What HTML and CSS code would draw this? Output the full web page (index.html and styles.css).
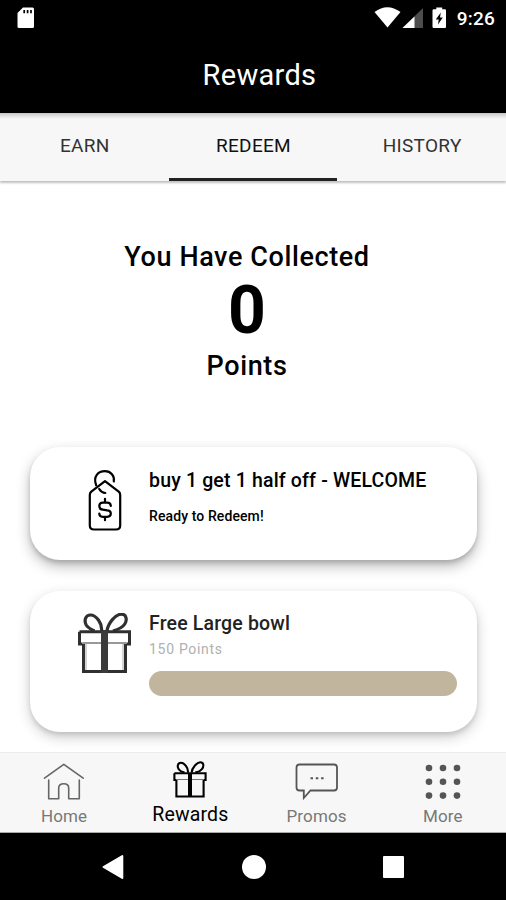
FILE: index.html
```html
<!DOCTYPE html>
<html lang="en">
<head>
    <meta charset="UTF-8">
    <meta name="viewport" content="width=device-width, initial-scale=1.0">
    <title>Rewards</title>
    <link rel="stylesheet" href="styles.css">
</head>
<body>
    <div class="app">
        <!-- Status bar -->
        <div class="status-bar">
            <svg class="sd-icon" width="18" height="22" viewBox="0 0 18 22">
                <path d="M6 0.5H15.5Q17 0.5 17 2V19.5Q17 21 15.5 21H2Q0.5 21 0.5 19.5V6Z" fill="#fff"/>
                <path d="M7.2 3V6.3M10.6 3V6.3M14 3V6.3" stroke="#000" stroke-width="1.7"/>
            </svg>
            <div class="status-right">
                <svg class="wifi" width="27" height="22" viewBox="0 0 27 22">
                    <path d="M0.5 5Q13.3 -4.5 26.5 5L13.5 20.5Z" fill="#fff"/>
                </svg>
                <svg class="signal" width="22" height="21" viewBox="0 0 22 21">
                    <path d="M21 0V20H0.5Z" fill="#4d4d4d"/>
                    <path d="M12.5 8.5V20H0.5Z" fill="#fff"/>
                </svg>
                <svg class="battery" width="15" height="22" viewBox="0 0 15 22">
                    <path d="M4.3 0.5H10.2V2.2H13Q14 2.2 14 3.5V19.7Q14 21 13 21H1.8Q0.5 21 0.5 19.7V3.5Q0.5 2.2 1.8 2.2H4.3Z" fill="#fff"/>
                    <path d="M8.8 5.5L3.8 12.6H6.7L6 17.5L10.8 10.5H8Z" fill="#000"/>
                </svg>
                <span class="clock">9:26</span>
            </div>
        </div>

        <div class="header"><h1>Rewards</h1></div>

        <div class="tabs">
            <div class="tab"><span>EARN</span></div>
            <div class="tab active"><span>REDEEM</span></div>
            <div class="tab"><span>HISTORY</span></div>
        </div>

        <div class="content">
            <div class="points">
                <div class="points-title">You Have Collected</div>
                <div class="points-value">0</div>
                <div class="points-label">Points</div>
            </div>

            <div class="card card-offer">
                <div class="card-icon">
                    <svg width="34" height="63" viewBox="0 0 34 63" fill="none" stroke="#000" stroke-width="2.2" stroke-linecap="round" stroke-linejoin="round">
                        <path d="M8.2 16.3C4.8 7.5 10.2 2.2 17 2.2C22.8 2.2 26.8 6.8 25.8 12.5"/>
                        <path d="M11.2 20Q13.5 23.8 17.3 24"/>
                        <path d="M17 12.2L30.7 22.7Q32.2 24 32.2 26V56.5Q32.2 60.5 28 60.5H6Q1.8 60.5 1.8 56.5V26Q1.8 24 3.3 22.7Z"/>
                        <path d="M22.8 36.8Q22.5 33.7 19.3 33.7H14.8Q11.3 33.7 11.3 37.1Q11.3 40.5 14.8 40.7L19.2 41.3Q22.8 41.5 22.8 44.6Q22.8 47.8 19.2 47.8H14.8Q11.3 47.8 11.3 44.5M17 29.8V33.7M17 47.8V51.2"/>
                    </svg>
                </div>
                <div class="card-body">
                    <div class="card-title">buy 1 get 1 half off - WELCOME</div>
                    <div class="card-ready">Ready to Redeem!</div>
                </div>
            </div>

            <div class="card card-gift">
                <div class="card-icon">
                    <svg width="54" height="62" viewBox="0 0 54 62" fill="none" stroke="#303030">
                        <path d="M5.5 31V58.5H47.5V31" stroke-width="3"/>
                        <path d="M1.5 18.8H51.5V31H48.5M4.5 31H1.5V18.8" stroke-width="3"/>
                        <path d="M4.5 30H48.5" stroke-width="1.4" stroke="#777"/>
                        <path d="M8 31V57M45 31V57" stroke-width="1" stroke="#aaa"/>
                        <path d="M26.5 17V60" stroke-width="7" stroke="#3b3b3b"/>
                        <path d="M23.5 18C24.5 10 18 2 12.5 2C6.8 2 6.2 8.2 8.2 12Q10 15 16.5 18M29 18C30 10 37.5 1.2 43.5 1.2C49 1.2 49 7.5 46.8 11Q44.2 15.2 35 18" stroke-width="3.2"/>
                    </svg>
                </div>
                <div class="card-body">
                    <div class="card-title gift-title">Free Large bowl</div>
                    <div class="card-points">150 Points</div>
                    <div class="progress"></div>
                </div>
            </div>
        </div>

        <!-- Bottom tab bar -->
        <div class="tab-bar">
            <div class="nav-item">
                <svg width="42" height="38" viewBox="0 0 42 38" fill="none" stroke="#666" stroke-width="1.6" stroke-linejoin="round" stroke-linecap="round">
                    <path d="M1.5 15.2L20.8 1.3L40.2 15.2"/>
                    <path d="M5.7 17V35.7H15.7V25Q15.7 20.7 20.8 20.7Q25.7 20.7 25.7 25V35.7H36.3V17"/>
                </svg>
                <span>Home</span>
            </div>
            <div class="nav-item rewards">
                <svg width="34" height="38" viewBox="0 0 34 38" fill="none" stroke="#000" stroke-width="2.1">
                    <path d="M3.4 19V35.5H30.6V19"/>
                    <path d="M1.4 12.2H32.6V19H30.6M3.4 19H1.4V12.2"/>
                    <path d="M3 18.5H31" stroke-width="0.9" stroke="#666"/>
                    <path d="M17 12V35.5" stroke-width="4"/>
                    <path d="M15 11.6C15.5 6.8 11.3 1.8 8 1.8C4.2 1.8 4.2 6 5.7 8.2Q7.3 10.7 11.5 11.6M18.6 11.6C19 6.5 24.2 1.2 27.3 1.2C31 1.2 31 5.5 29 8Q27.2 10.6 22.2 11.6"/>
                </svg>
                <span>Rewards</span>
            </div>
            <div class="nav-item">
                <svg width="44" height="38" viewBox="0 0 44 38" fill="none" stroke="#555" stroke-width="1.8">
                    <path d="M4.5 1.5H39Q42 1.5 42 4.5V24.5Q42 27.5 39 27.5H15.5L8.8 35V27.5H4.5Q1.5 27.5 1.5 24.5V4.5Q1.5 1.5 4.5 1.5Z"/>
                    <path d="M15.5 15.2H18M20.8 15.2H23.3M26.1 15.2H28.6" stroke-width="2"/>
                </svg>
                <span>Promos</span>
            </div>
            <div class="nav-item more">
                <svg width="36" height="36" viewBox="0 0 36 36" fill="#555">
                    <circle cx="4" cy="4" r="3.3"/><circle cx="18" cy="4" r="3.3"/><circle cx="32" cy="4" r="3.3"/>
                    <circle cx="4" cy="17.8" r="3.3"/><circle cx="18" cy="17.8" r="3.3"/><circle cx="32" cy="17.8" r="3.3"/>
                    <circle cx="4" cy="31.6" r="3.3"/><circle cx="18" cy="31.6" r="3.3"/><circle cx="32" cy="31.6" r="3.3"/>
                </svg>
                <span>More</span>
            </div>
        </div>

        <!-- Android navigation -->
        <div class="system-nav">
            <svg width="23" height="26" viewBox="0 0 23 26">
                <path d="M20.3 2V24L1.5 13Z" fill="#fff" stroke="#fff" stroke-width="2" stroke-linejoin="round"/>
            </svg>
            <div class="sys-home"></div>
            <div class="sys-recent"></div>
        </div>
    </div>
</body>
</html>
```
FILE: styles.css
```css
* {
    box-sizing: border-box;
}

body {
    margin: 0;
    font-family: Roboto, sans-serif;
    background: #fff;
    color: #000;
}

.app {
    display: flex;
    flex-direction: column;
    width: 506px;
    height: 900px;
    overflow: hidden;
}

.app svg {
    display: block;
    flex: none;
}

.app span,
.card-title {
    white-space: nowrap;
}

.status-bar {
    display: flex;
    justify-content: space-between;
    height: 36px;
    padding: 7px 11px 0 17px;
    background: #000;
}

.status-right {
    display: flex;
    color: #fff;
}

.wifi {
    margin-left: -1px;
}

.signal {
    margin: 1px 0 0 1px;
}

.battery {
    margin-left: 8px;
}

.clock {
    margin-left: 10px;
    font-size: 19px;
    font-weight: 500;
    line-height: 23px;
    letter-spacing: 0.2px;
}

.header {
    display: flex;
    justify-content: center;
    height: 77px;
    padding: 21px 0 0 13px;
    background: #000;
    color: #fff;
}

.header h1 {
    margin: 0;
    font-size: 29px;
    font-weight: 400;
    line-height: 36px;
    letter-spacing: 0.3px;
}

.tabs {
    position: relative;
    z-index: 1;
    display: flex;
    height: 68px;
    background: linear-gradient(#c8c5c5, #e2e0e0 3px, #f7f7f7 6px);
    box-shadow: 0 2px 2px rgba(0, 0, 0, 0.25);
}

.tab {
    display: flex;
    justify-content: center;
    flex: 1;
    padding: 20px 0 0 1px;
    font-size: 19px;
    line-height: 26px;
    letter-spacing: 0.3px;
    color: #333;
}

.tab.active {
    border-bottom: 3px solid #222;
    color: #111;
}

.content {
    height: 571px;
    padding: 59px 29px 0 30px;
    overflow: hidden;
}

.points {
    height: 207px;
    padding-right: 13px;
    font-weight: 500;
    text-align: center;
}

.points-title {
    font-size: 27px;
    line-height: 34px;
    letter-spacing: 0.6px;
}

.points-value {
    height: 73px;
    font-size: 66px;
    font-weight: 700;
    line-height: 74px;
}

.points-label {
    font-size: 27px;
    line-height: 38px;
    letter-spacing: 0.6px;
}

.card {
    display: flex;
    border-radius: 30px;
    background: #fff;
    box-shadow: 0 6px 14px rgba(0, 0, 0, 0.28), 0 3px 4px rgba(0, 0, 0, 0.14);
}

.card-offer {
    height: 113px;
    padding-top: 22px;
}

.card-gift {
    height: 141px;
    margin-top: 31px;
    padding-top: 21px;
    box-shadow: 0 5px 14px rgba(0, 0, 0, 0.2), 0 3px 4px rgba(0, 0, 0, 0.1);
}

.card-icon {
    display: flex;
    justify-content: center;
    width: 119px;
    padding-left: 31px;
}

.card-gift .card-icon {
    padding-top: 1px;
}

.card-title {
    font-size: 19.5px;
    font-weight: 500;
    line-height: 24px;
    letter-spacing: 0.17px;
}

.gift-title {
    color: #222;
}

.card-ready {
    margin-top: 13px;
    font-size: 14px;
    font-weight: 500;
    line-height: 20px;
    letter-spacing: 0.1px;
}

.card-points {
    margin-top: 3px;
    font-size: 14px;
    line-height: 20px;
    letter-spacing: 0.7px;
    color: #b0b0b0;
}

.progress {
    width: 308px;
    height: 25px;
    margin-top: 12px;
    border-radius: 13px;
    background: #c1b59d;
}

.tab-bar {
    position: relative;
    z-index: 1;
    display: flex;
    height: 81px;
    padding-left: 1px;
    border-top: 1px solid #ebebeb;
    border-bottom: 1px solid #aaa;
    background: #f7f7f7;
}

.nav-item {
    display: flex;
    flex: 1;
    flex-direction: column;
    align-items: center;
    padding-top: 10px;
    font-size: 17px;
    line-height: 24px;
    letter-spacing: 0.15px;
    color: #777;
}

.nav-item span {
    margin-top: 3px;
}

.rewards {
    padding-top: 8px;
    font-size: 19.5px;
    color: #000;
}

.rewards span {
    margin-top: 4px;
}

.more {
    padding-top: 11px;
}

.more span {
    margin-top: 4px;
}

.system-nav {
    display: flex;
    align-items: center;
    height: 67px;
    padding-left: 102px;
    background: #000;
}

.sys-home {
    width: 24px;
    height: 24px;
    margin-left: 117px;
    border-radius: 50%;
    background: #fff;
}

.sys-recent {
    width: 21px;
    height: 22px;
    margin-left: 117px;
    border-radius: 1px;
    background: #fff;
}
```
